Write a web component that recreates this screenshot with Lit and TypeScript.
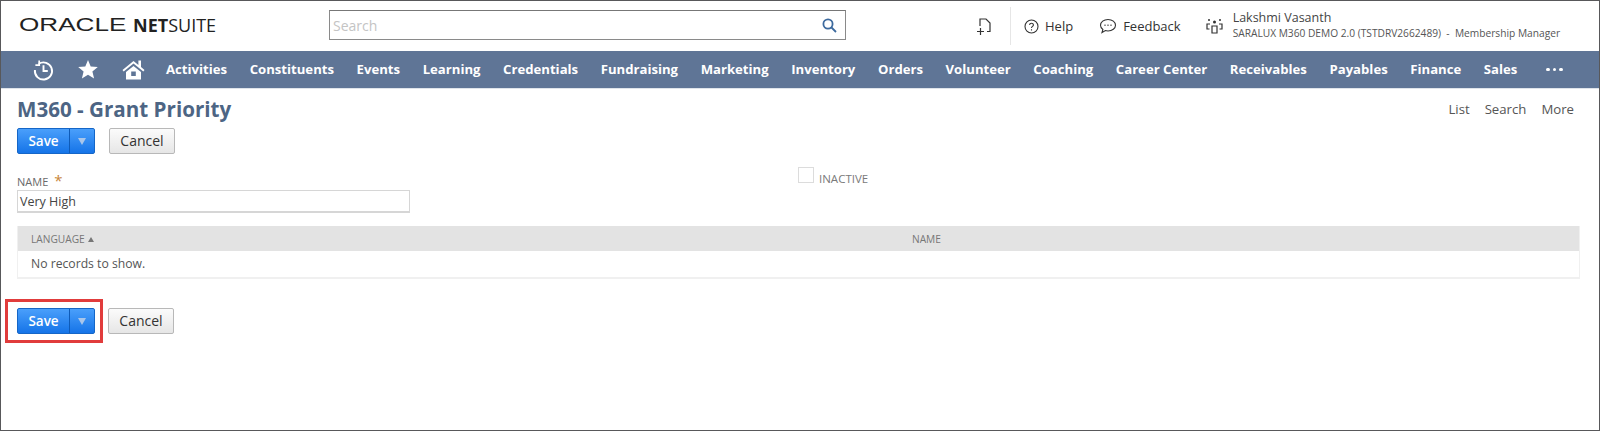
import { LitElement, html, css } from "lit";
import { customElement } from "lit/decorators.js";

const NAV = ["Activities","Constituents","Events","Learning","Credentials","Fundraising","Marketing","Inventory","Orders","Volunteer","Coaching","Career Center","Receivables","Payables","Finance","Sales"];

@customElement("app-root")
export class AppRoot extends LitElement {
  static styles = css`
    :host { display: block; width: 1600px; height: 431px; box-sizing: border-box; border: 1px solid #58585a; background: #fff; overflow: hidden; font-family: "Open Sans", sans-serif; color: #333; }
    .head { height: 50px; display: flex; align-items: flex-start; box-sizing: border-box; }
    .logo { margin-left: 18px; width: 310px; height: 48px; display: flex; align-items: center; color: #222; line-height: 1; }
    .oracle { font: 400 18px "Liberation Sans", sans-serif; transform: scaleX(1.45); transform-origin: left; width: 114px; }
    .net { font: 700 18px "Open Sans", sans-serif; }
    .suite { font: 400 18px "Open Sans", sans-serif; }
    .search { width: 517px; height: 30px; margin-top: 9px; box-sizing: border-box; border: 1px solid #8a8a8a; border-top-color: #777; display: flex; align-items: center; justify-content: space-between; padding: 0 8px 0 3px; font-size: 14px; color: #c4c4c4; }
    .tools { display: flex; align-items: center; height: 38px; margin: 6px 0 0 128px; font-size: 13px; color: #333; }
    .t1 { width: 37px; padding-left: 2px; box-sizing: border-box; height: 38px; display: flex; align-items: center; border-right: 1px solid #e6e6e6; }
    .tool { display: flex; align-items: center; gap: 6px; }
    .help { margin-left: 13px; }
    .fb { margin-left: 26px; }
    .role { margin-left: 25px; }
    .user { margin-left: 10px; margin-top: -2px; display: flex; flex-direction: column; }
    .uname { font-size: 12.5px; line-height: 17px; color: #444; }
    .uacct { font-size: 10.2px; line-height: 15px; color: #555; white-space: nowrap; }
    nav { height: 37px; background: #5f7596; display: flex; align-items: center; color: #fff; font-weight: 700; font-size: 13.15px; border-bottom: 1px solid #dfe4ea; }
    .icons { display: flex; align-items: center; width: 165px; padding-left: 32px; box-sizing: border-box; flex: none; gap: 24px; height: 100%; }
    .items { display: flex; gap: 22.6px; white-space: nowrap; padding-bottom: 1px; }
    .dots { margin-left: 29px; display: flex; gap: 3px; }
    .dots i { width: 3.5px; height: 3.5px; border-radius: 50%; background: #fff; display: block; }
    main { padding: 0 16px; }
    .titlebar { display: flex; justify-content: space-between; align-items: center; height: 39px; }
    h1 { margin: 0; font-size: 20.6px; font-weight: 700; color: #4d6584; line-height: 26px; }
    .links { display: flex; gap: 15px; font-size: 13.2px; color: #555; margin-right: 9px; }
    .btns { display: flex; align-items: center; gap: 14px; height: 26px; }
    .save { display: flex; width: 78px; height: 26px; box-sizing: border-box; border-radius: 2px; background: linear-gradient(#4a9ffb, #1574e8); border: 1px solid #1566c7; color: #fff; font-size: 13.5px; overflow: hidden; align-items: stretch; }
    .save b { font-weight: 600; width: 52px; display: flex; align-items: center; justify-content: center; border-right: 1px solid #0e5bb8; padding-bottom: 1px; box-sizing: border-box; }
    .save span { flex: 1; display: flex; align-items: center; justify-content: center; }
    .cancel { width: 66px; height: 26px; box-sizing: border-box; border: 1px solid #b8b8b8; border-radius: 2px; background: linear-gradient(#fbfbfb, #e6e6e6); font-size: 14px; color: #333; display: flex; align-items: center; justify-content: center; padding-bottom: 1px; }
    .form { display: grid; grid-template-columns: 781px 1fr; margin-top: 13px; height: 46px; }
    .lab { font-size: 11px; color: #6a6a6a; line-height: 14px; padding-top: 8px; display: flex; gap: 6px; }
    .lab em { color: #c8863a; font-style: normal; font-size: 15px; line-height: 10px; }
    .inp { width: 393px; height: 23px; box-sizing: border-box; border: 1px solid #d6d6d6; border-bottom-width: 2px; margin-top: 1px; padding: 1px 0 0 2px; font-size: 12.5px; line-height: 20px; color: #444; }
    .inact { display: flex; gap: 5px; align-items: flex-start; font-size: 11.5px; color: #7a7a7a; }
    .inact i { width: 16px; height: 16px; box-sizing: border-box; border: 1px solid #dcdcdc; display: block; }
    .inact span { line-height: 16px; padding-top: 4px; }
    .table { margin-top: 13px; width: 1563px; box-sizing: border-box; border: 1px solid #f0f0f0; border-top: 0; border-bottom-width: 2px; }
    .thead { height: 25px; background: #e3e3e3; display: grid; grid-template-columns: 881px 1fr; align-items: center; font-size: 10.2px; color: #777; padding-left: 13px; }
    .sort { display: inline-block; width: 0; height: 0; border: 3px solid transparent; border-top: 0; border-bottom: 5px solid #777; margin-left: 3px; vertical-align: 1px; }
    .tbody { height: 26px; display: flex; align-items: center; padding: 0 0 1px 13px; box-sizing: border-box; font-size: 12.2px; color: #555; }
    .foot-row { display: flex; align-items: center; margin: 20px 0 0 -12px; }
    .foot { border: 3px solid #e13c3c; padding: 6px 5px 6px 9px; }
    .foot-cancel { margin-left: 5px; }
  `;

  render() {
    const caret = html`<svg width="10" height="9" viewBox="0 0 10 9"><path d="M1 1h8L5 8z" fill="#a9c6ea"/></svg>`;
    const save = html`<div class="save"><b>Save</b><span>${caret}</span></div>`;
    const cancel = html`<div class="cancel">Cancel</div>`;
    return html`
      <div class="head">
        <div class="logo"><span class="oracle">ORACLE</span><span class="net">NET</span><span class="suite">SUITE</span></div>
        <div class="search">Search
          <svg width="15" height="15" viewBox="0 0 15 15" fill="none" stroke="#3d6a9e" stroke-width="1.8"><circle cx="6" cy="6" r="4.6"/><path d="M9.5 9.5L14 14"/></svg>
        </div>
        <div class="tools">
          <div class="t1">
            <svg width="17" height="19" viewBox="0 0 17 19" fill="none" stroke="#333" stroke-width="1.2"><path d="M4 9V2h6l4 4v8.500h-3"/><path d="M1 14.500h7M4.500 11v7"/></svg>
          </div>
          <div class="tool help"><svg width="15" height="15" viewBox="0 0 15 15" fill="none" stroke="#333" stroke-width="1.1"><circle cx="7.5" cy="7.5" r="6.5"/><path d="M5.6 6c0-2.400 3.800-2.400 3.800 0 0 1.400-1.900 1.400-1.900 3M7.500 10.200v1.200"/></svg><span>Help</span></div>
          <div class="tool fb"><svg width="18" height="16" viewBox="0 0 18 16" fill="none" stroke="#333" stroke-width="1.1"><path d="M9 1.500c4.200 0 7.500 2.500 7.500 5.700S13.200 13 9 13c-1 0-1.800-.1-2.600-.4L3 14.500l.9-3C2.400 10.400 1.500 9 1.500 7.200 1.500 4 4.800 1.500 9 1.500z"/><path d="M5.500 7.200h1M8.500 7.200h1M11.500 7.200h1" stroke-width="1.500"/></svg><span>Feedback</span></div>
          <div class="tool role">
            <svg width="17" height="18" viewBox="0 0 17 18" fill="none" stroke="#333" stroke-width="1.2"><path d="M6 9h5v7H6z"/><path d="M3.500 12H1V7h3M13.500 12H16V7h-3"/><circle cx="8.500" cy="5" r="1.500" fill="#333" stroke="none"/><circle cx="3" cy="3" r="1" fill="#333" stroke="none"/><circle cx="14" cy="3" r="1" fill="#333" stroke="none"/></svg>
          </div>
          <div class="user"><div class="uname">Lakshmi Vasanth</div><div class="uacct">SARALUX M360 DEMO 2.0 (TSTDRV2662489) &nbsp;-&nbsp; Membership Manager</div></div>
        </div>
      </div>
      <nav>
        <div class="icons">
          <svg width="21" height="22" viewBox="0 0 22 22" fill="none" stroke="#fff" stroke-width="2"><path d="M6 4.500A9 9 0 1 1 2 11"/><path d="M6.500 1v5h-4" stroke-width="1.800"/><path d="M11 6v6h4.500"/></svg>
          <svg width="20" height="19" viewBox="0 0 20 19" fill="#fff"><path d="M10 0l2.700 6.500 7.100.5-5.400 4.600 1.700 7L10 14.800 3.900 18.600l1.700-7L.2 7l7.100-.5z"/></svg>
          <svg width="23" height="21" viewBox="0 0 23 21" fill="#fff"><path d="M11.500 2L.5 11l1.200 1.400L11.500 4.600l9.800 7.800 1.200-1.400-3.500-2.900V1.500h-2.600v4.400z"/><path fill-rule="evenodd" d="M4 13l7.500-6 7.500 6v7.500H4zM9.200 12.500v4.500h4.600v-4.500z"/></svg>
        </div>
        <div class="items">${NAV.map((n) => html`<span>${n}</span>`)}</div>
        <div class="dots"><i></i><i></i><i></i></div>
      </nav>
      <main>
        <div class="titlebar"><h1>M360 - Grant Priority</h1><div class="links"><span>List</span><span>Search</span><span>More</span></div></div>
        <div class="btns">${save}${cancel}</div>
        <div class="form">
          <div><div class="lab">NAME <em>*</em></div><div class="inp">Very High</div></div>
          <div class="inact"><i></i><span>INACTIVE</span></div>
        </div>
        <div class="table">
          <div class="thead"><div>LANGUAGE<span class="sort"></span></div><div>NAME</div></div>
          <div class="tbody">No records to show.</div>
        </div>
        <div class="foot-row">
          <div class="foot">${save}</div>
          <div class="foot-cancel">${cancel}</div>
        </div>
      </main>
    `;
  }
}
